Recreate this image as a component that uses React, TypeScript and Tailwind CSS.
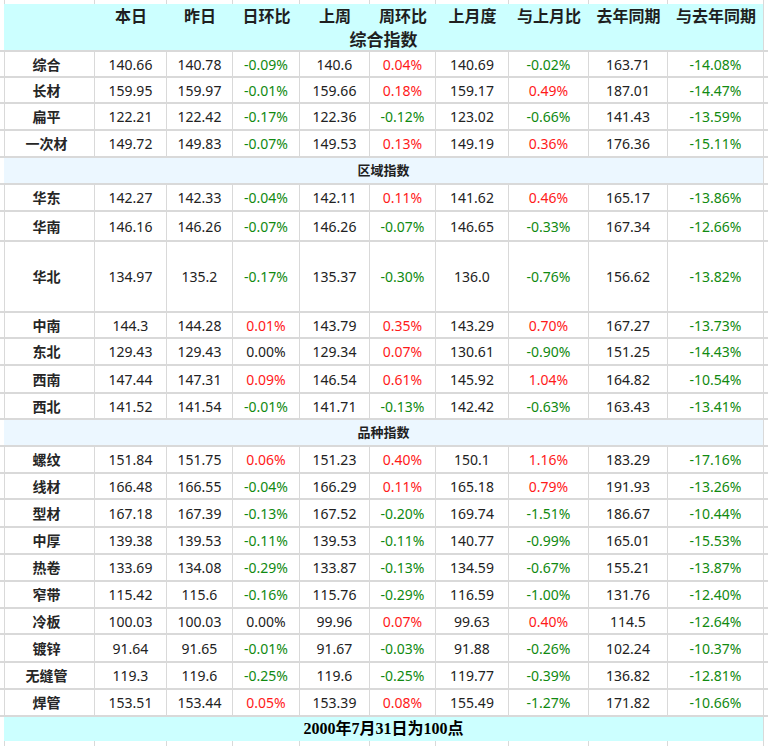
const COLS = [
  'w-[90px]',
  'w-[72px]',
  'w-[66px]',
  'w-[67px]',
  'w-[70px]',
  'w-[66px]',
  'w-[73px]',
  'w-[80px]',
  'w-[79px]',
  'w-[96px]',
];

const HEADS = ['', '本日', '昨日', '日环比', '上周', '周环比', '上月度', '与上月比', '去年同期', '与去年同期'];

type Row = { kind: 'data'; h: string; cells: string[] } | { kind: 'section'; h: string; title: string };

const ROWS: Row[] = [
  { kind: 'data', h: 'h-[26px]', cells: ['综合', '140.66', '140.78', '-0.09%', '140.6', '0.04%', '140.69', '-0.02%', '163.71', '-14.08%'] },
  { kind: 'data', h: 'h-[26px]', cells: ['长材', '159.95', '159.97', '-0.01%', '159.66', '0.18%', '159.17', '0.49%', '187.01', '-14.47%'] },
  { kind: 'data', h: 'h-[27px]', cells: ['扁平', '122.21', '122.42', '-0.17%', '122.36', '-0.12%', '123.02', '-0.66%', '141.43', '-13.59%'] },
  { kind: 'data', h: 'h-[27px]', cells: ['一次材', '149.72', '149.83', '-0.07%', '149.53', '0.13%', '149.19', '0.36%', '176.36', '-15.11%'] },
  { kind: 'section', h: 'h-[27px]', title: '区域指数' },
  { kind: 'data', h: 'h-[27px]', cells: ['华东', '142.27', '142.33', '-0.04%', '142.11', '0.11%', '141.62', '0.46%', '165.17', '-13.86%'] },
  { kind: 'data', h: 'h-[30px]', cells: ['华南', '146.16', '146.26', '-0.07%', '146.26', '-0.07%', '146.65', '-0.33%', '167.34', '-12.66%'] },
  { kind: 'data', h: 'h-[71px]', cells: ['华北', '134.97', '135.2', '-0.17%', '135.37', '-0.30%', '136.0', '-0.76%', '156.62', '-13.82%'] },
  { kind: 'data', h: 'h-[26px]', cells: ['中南', '144.3', '144.28', '0.01%', '143.79', '0.35%', '143.29', '0.70%', '167.27', '-13.73%'] },
  { kind: 'data', h: 'h-[27px]', cells: ['东北', '129.43', '129.43', '0.00%', '129.34', '0.07%', '130.61', '-0.90%', '151.25', '-14.43%'] },
  { kind: 'data', h: 'h-[28px]', cells: ['西南', '147.44', '147.31', '0.09%', '146.54', '0.61%', '145.92', '1.04%', '164.82', '-10.54%'] },
  { kind: 'data', h: 'h-[26px]', cells: ['西北', '141.52', '141.54', '-0.01%', '141.71', '-0.13%', '142.42', '-0.63%', '163.43', '-13.41%'] },
  { kind: 'section', h: 'h-[27px]', title: '品种指数' },
  { kind: 'data', h: 'h-[27px]', cells: ['螺纹', '151.84', '151.75', '0.06%', '151.23', '0.40%', '150.1', '1.16%', '183.29', '-17.16%'] },
  { kind: 'data', h: 'h-[26px]', cells: ['线材', '166.48', '166.55', '-0.04%', '166.29', '0.11%', '165.18', '0.79%', '191.93', '-13.26%'] },
  { kind: 'data', h: 'h-[28px]', cells: ['型材', '167.18', '167.39', '-0.13%', '167.52', '-0.20%', '169.74', '-1.51%', '186.67', '-10.44%'] },
  { kind: 'data', h: 'h-[27px]', cells: ['中厚', '139.38', '139.53', '-0.11%', '139.53', '-0.11%', '140.77', '-0.99%', '165.01', '-15.53%'] },
  { kind: 'data', h: 'h-[27px]', cells: ['热卷', '133.69', '134.08', '-0.29%', '133.87', '-0.13%', '134.59', '-0.67%', '155.21', '-13.87%'] },
  { kind: 'data', h: 'h-[27px]', cells: ['窄带', '115.42', '115.6', '-0.16%', '115.76', '-0.29%', '116.59', '-1.00%', '131.76', '-12.40%'] },
  { kind: 'data', h: 'h-[26px]', cells: ['冷板', '100.03', '100.03', '0.00%', '99.96', '0.07%', '99.63', '0.40%', '114.5', '-12.64%'] },
  { kind: 'data', h: 'h-[28px]', cells: ['镀锌', '91.64', '91.65', '-0.01%', '91.67', '-0.03%', '91.88', '-0.26%', '102.24', '-10.37%'] },
  { kind: 'data', h: 'h-[27px]', cells: ['无缝管', '119.3', '119.6', '-0.25%', '119.6', '-0.25%', '119.77', '-0.39%', '136.82', '-12.81%'] },
  { kind: 'data', h: 'h-[27px]', cells: ['焊管', '153.51', '153.44', '0.05%', '153.39', '0.08%', '155.49', '-1.27%', '171.82', '-10.66%'] },
];

const LINE = 'border-[#d9d9d9]';

function tone(v: string) {
  if (!v.endsWith('%') || v === '0.00%') return 'text-[#222]';
  return v.startsWith('-') ? 'text-[#118a11]' : 'text-[#ff1a1a]';
}

function Gutter({ right }: { right?: boolean }) {
  return <div className={`${right ? 'w-[4px]' : 'w-[5px] border-r'} ${LINE} shrink-0`} />;
}

function EmptyRow({ h }: { h: string }) {
  return (
    <div className={`flex ${h}`}>
      <Gutter />
      {COLS.map((w, i) => (
        <div key={i} className={`${w} shrink-0 border-r ${LINE}`} />
      ))}
      <Gutter right />
    </div>
  );
}

function SpanRow({ h, bg, children }: { h: string; bg: string; children: React.ReactNode }) {
  return (
    <div className={`flex ${h} border-t-2 ${LINE}`}>
      <div className="w-[4px] shrink-0" />
      <div className={`w-[760px] shrink-0 border-r ${LINE} ${bg} flex items-center justify-center`}>{children}</div>
      <Gutter right />
    </div>
  );
}

export default function App() {
  return (
    <div className="w-[768px] h-[746px] overflow-hidden bg-white text-[14px] text-[#222] font-['Noto_Sans','Noto_Sans_CJK_SC',sans-serif]">
      <EmptyRow h="h-[4px]" />

      <div className="flex h-[46px]">
        <div className="w-[4px] shrink-0" />
        <div className={`w-[760px] shrink-0 border-r ${LINE} bg-[#ccffff] flex flex-col`}>
          <div className="flex h-[24px] items-center">
            <div className="w-[1px] shrink-0" />
            {HEADS.map((t, i) => (
              <div key={i} className={`${COLS[i]} shrink-0 text-center text-[16px] font-bold leading-none text-[#1f1f1f]`}>
                {t}
              </div>
            ))}
          </div>
          <div className="flex h-[22px] items-center justify-center text-[17px] font-bold leading-none text-[#1f1f1f]">
            综合指数
          </div>
        </div>
        <Gutter right />
      </div>

      {ROWS.map((r, ri) =>
        r.kind === 'section' ? (
          <SpanRow key={ri} h={r.h} bg="bg-[#ecf7ff]">
            <span className="text-[13px] font-bold text-[#1f1f1f]">{r.title}</span>
          </SpanRow>
        ) : (
          <div key={ri} className={`flex ${r.h} border-t-2 ${LINE}`}>
            <Gutter />
            {r.cells.map((c, ci) => (
              <div
                key={ci}
                className={`${COLS[ci]} shrink-0 border-r ${LINE} flex items-center justify-center ${
                  ci === 0 ? 'font-bold text-[#262626] pr-[6px]' : tone(c)
                }`}
              >
                {c}
              </div>
            ))}
            <Gutter right />
          </div>
        ),
      )}

      <SpanRow h="h-[26px]" bg="bg-[#ccffff]">
        <span className="text-[16px] font-bold text-black font-['Liberation_Serif','Noto_Sans_CJK_SC',serif]">
          2000年7月31日为100点
        </span>
      </SpanRow>
      <EmptyRow h="h-[5px]" />
    </div>
  );
}
